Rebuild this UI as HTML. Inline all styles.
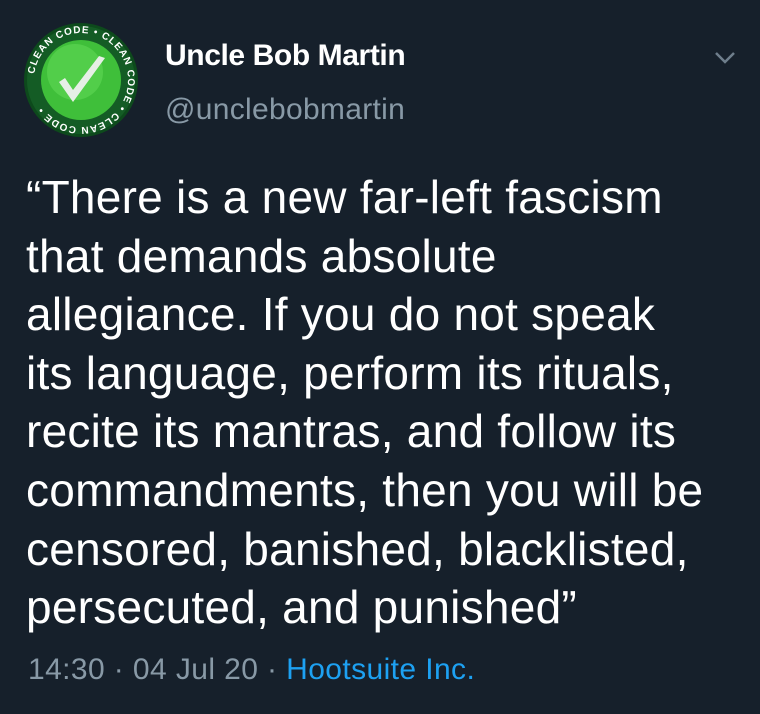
<!DOCTYPE html>
<html><head><meta charset="utf-8"><style>
body{margin:0;width:760px;height:714px;background:#16202b;overflow:hidden;font-family:"Liberation Sans",Arial,sans-serif;position:relative}
.name{position:absolute;left:165px;top:38px;font-size:30px;line-height:36px;font-weight:bold;color:#fff;letter-spacing:-0.4px}
.handle{position:absolute;left:165px;top:92px;font-size:30px;line-height:36px;color:#8899a6;letter-spacing:0.3px}
.text{position:absolute;left:26px;top:168px;font-size:46px;line-height:58.6px;color:#fff;width:740px;letter-spacing:0.25px;white-space:nowrap}
.foot{position:absolute;left:28px;top:652px;font-size:30px;line-height:36px;color:#8899a6;letter-spacing:0.4px}
.foot span{color:#1da1f2}
</style></head><body>
<svg style="position:absolute;left:23px;top:22px" width="116" height="116" viewBox="0 0 116 116">
<circle cx="58" cy="58" r="57" fill="#0d4a1c"/>
<circle cx="58" cy="58" r="54" fill="#145c25"/>
<circle cx="58" cy="58" r="40" fill="#3fbf3a"/>
<circle cx="52" cy="50" r="28" fill="#5fd855" opacity="0.6"/>
<path d="M36 60 L50 80 L82 36 L76 34 L50 68 L42 56 Z" fill="#e6efe6"/>
<defs><path id="ring" d="M58 58 m-47 0 a47 47 0 1 1 94 0 a47 47 0 1 1 -94 0"/></defs>
<text font-size="10" font-weight="bold" fill="#fff" font-family="Liberation Sans" letter-spacing="1"><textPath href="#ring" startOffset="2%">CLEAN CODE • CLEAN CODE • CLEAN CODE •</textPath></text>
</svg>
<div class="name">Uncle Bob Martin</div>
<div class="handle">@unclebobmartin</div>
<svg style="position:absolute;left:713px;top:50px" width="24" height="16" viewBox="0 0 24 16"><path d="M3 3 L12 12 L21 3" stroke="#6e7e8c" stroke-width="2.5" fill="none"/></svg>
<div class="text">“There is a new far-left fascism<br>that demands absolute<br>allegiance. If you do not speak<br>its language, perform its rituals,<br>recite its mantras, and follow its<br>commandments, then you will be<br>censored, banished, blacklisted,<br>persecuted, and punished”</div>
<div class="foot">14:30 · 04 Jul 20 · <span>Hootsuite Inc.</span></div>
</body></html>
